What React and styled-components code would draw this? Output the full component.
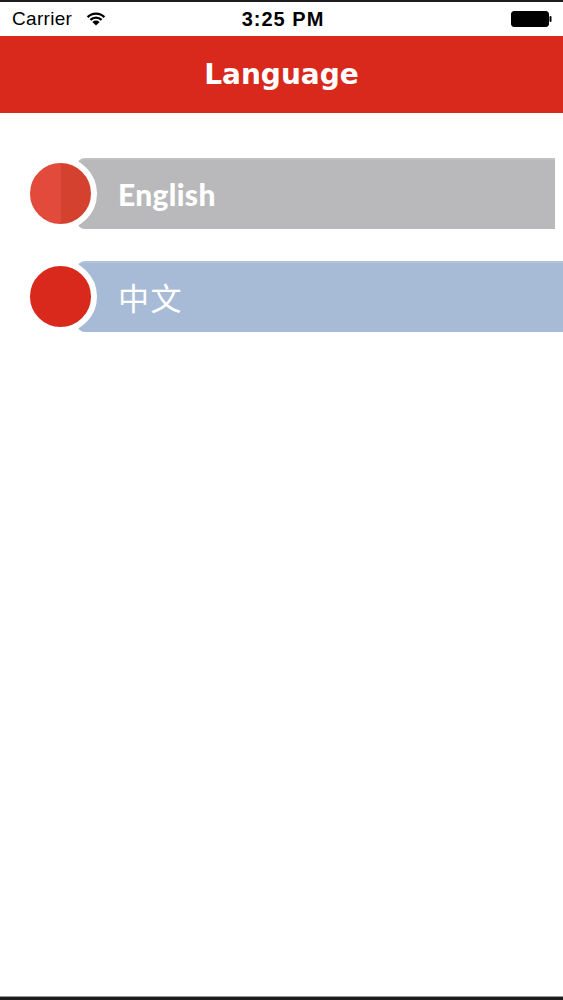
import React from 'react';
import styled, { createGlobalStyle } from 'styled-components';

const GlobalStyle = createGlobalStyle`
  html, body {
    margin: 0;
    padding: 0;
    background: #fff;
  }
  * {
    box-sizing: border-box;
  }
`;

const languages = [
  { key: 'en', label: 'English', bar: '#b9b8ba', dot: 'linear-gradient(90deg, #e24b3c 0 50%, #d5412f 50% 100%)', latin: true, inset: 8 },
  { key: 'zh', label: '中文', bar: '#a7bbd6', dot: '#d9291d', latin: false, inset: 0 },
];

const WifiIcon = () => (
  <svg width="20" height="15" viewBox="0 0 20 15">
    <path d="M10 14.5 L6.4 10.9 A5.1 5.1 0 0 1 13.6 10.9 Z" fill="#000" />
    <path d="M3.6 8.1 A9 9 0 0 1 16.4 8.1 L14.8 9.7 A6.8 6.8 0 0 0 5.2 9.7 Z" fill="#000" />
    <path d="M0.8 5.3 A13 13 0 0 1 19.2 5.3 L17.6 6.9 A10.8 10.8 0 0 0 2.4 6.9 Z" fill="#000" />
  </svg>
);

const BatteryIcon = () => (
  <svg width="41" height="16" viewBox="0 0 41 16">
    <rect x="0.5" y="0.5" width="37" height="15" rx="2.5" fill="#000" stroke="#000" />
    <rect x="38.5" y="5" width="2" height="6" rx="1" fill="#000" />
  </svg>
);

const App = () => {
  return (
    <>
      <GlobalStyle />
      <Screen>
        <StatusBar>
          <Carrier>
            Carrier
            <WifiIcon />
          </Carrier>
          <Clock>3:25 PM</Clock>
          <Battery>
            <BatteryIcon />
          </Battery>
        </StatusBar>
        <NavBar>
          <Title>Language</Title>
        </NavBar>
        <List>
          {languages.map((lang) => (
            <Row key={lang.key}>
              <Dot fill={lang.dot} />
              <Bar color={lang.bar} inset={lang.inset}>
                <Label latin={lang.latin}>{lang.label}</Label>
              </Bar>
            </Row>
          ))}
        </List>
      </Screen>
    </>
  );
};

export default App;

const Screen = styled.div`
  display: flex;
  flex-direction: column;
  height: 1000px;
  border-top: 2px solid #1c1c1c;
  border-bottom: 3px solid #1c1c1c;
  box-shadow: inset 0 -1px 0 #9a9a9a;
  background: #fff;
`;

const StatusBar = styled.div`
  display: grid;
  grid-template-columns: 1fr auto 1fr;
  align-items: center;
  height: 34px;
  padding: 0 11px 0 12px;
  font-family: 'Liberation Sans', Arial, sans-serif;
  color: #000;
`;

const Carrier = styled.div`
  display: flex;
  align-items: center;
  gap: 14px;
  font-size: 19px;
  letter-spacing: 0.3px;

  svg {
    margin-top: -2px;
  }
`;

const Clock = styled.div`
  font-size: 20px;
  font-weight: 700;
  letter-spacing: 1px;
  margin-left: 2px;
`;

const Battery = styled.div`
  display: flex;
  justify-content: flex-end;
`;

const NavBar = styled.div`
  display: flex;
  align-items: center;
  justify-content: center;
  height: 77px;
  background: #d8291c;
`;

const Title = styled.h1`
  margin: 0;
  font-family: 'DejaVu Sans', sans-serif;
  font-weight: 700;
  font-size: 28px;
  letter-spacing: 0;
  color: #fff;
`;

const List = styled.div`
  display: flex;
  flex-direction: column;
  gap: 30px;
  padding-top: 44px;
`;

const Row = styled.div`
  display: flex;
  align-items: center;
  padding-left: 24px;
`;

const Dot = styled.div`
  position: relative;
  z-index: 1;
  flex: none;
  width: 73px;
  height: 73px;
  border-radius: 50%;
  border: 6px solid #fff;
  background: ${(props) => props.fill};
`;

const Bar = styled.div`
  display: flex;
  align-items: center;
  flex: 1;
  height: 71px;
  margin-left: -20px;
  margin-right: ${(props) => props.inset}px;
  padding-left: 41px;
  border-radius: 8px 0 0 8px;
  background: ${(props) => props.color};
  box-shadow: inset 0 5px 0 -3px rgba(255, 255, 255, 0.12);
`;

const Label = styled.span`
  color: #fff;
  font-family: ${(props) =>
    props.latin ? "Lato, 'Open Sans', sans-serif" : "'Noto Sans CJK SC', sans-serif"};
  font-weight: ${(props) => (props.latin ? 900 : 400)};
  font-size: ${(props) => (props.latin ? '30px' : '31px')};
  letter-spacing: ${(props) => (props.latin ? '0.3px' : '1.5px')};
`;
